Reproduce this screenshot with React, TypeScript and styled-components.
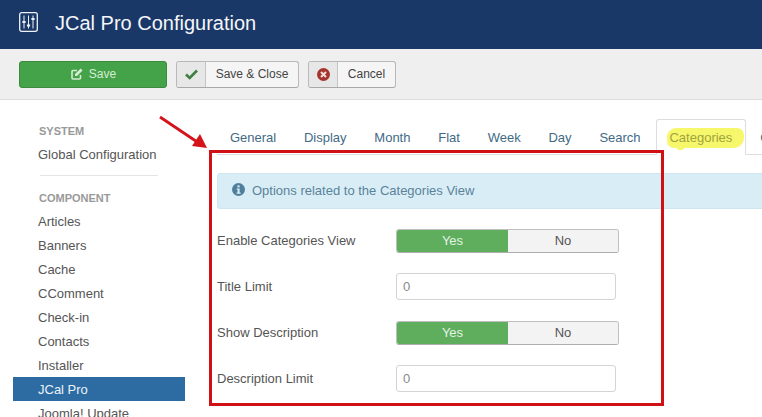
import React from "react";
import styled, { createGlobalStyle } from "styled-components";

const Global = createGlobalStyle`
  html, body { margin: 0; padding: 0; background: #fff; }
  body { width: 762px; height: 417px; overflow: hidden; font-family: "Liberation Sans", Arial, sans-serif; font-size: 13px; color: #515151; }
  * { box-sizing: border-box; }
`;

const Page = styled.div`
  position: relative;
  width: 762px;
  height: 417px;
  overflow: hidden;
`;

const Header = styled.header`
  height: 49px;
  background: #1a3867;
  display: flex;
  align-items: center;
  padding: 0 0 3px 19px;
  gap: 17px;
  color: #fff;
`;

const HeaderIcon = styled.svg`
  margin-bottom: 2px;
  flex: none;
`;

const Title = styled.h1`
  margin: 0;
  font-size: 20px;
  font-weight: 400;
  line-height: 24px;
  color: #f4f6fa;
`;

const Toolbar = styled.div`
  height: 51px;
  background: #efefef;
  border-bottom: 1px solid #dcdcdc;
  display: flex;
  align-items: center;
  padding: 0 0 0 19px;
  gap: 9px;
`;

const SaveButton = styled.button`
  width: 148px;
  height: 27px;
  background: #44a348;
  border: 1px solid #3b8a3e;
  border-radius: 3px;
  color: #d4ecd4;
  font: 12px "Liberation Sans", Arial, sans-serif;
  display: flex;
  align-items: center;
  justify-content: center;
  gap: 6px;
  padding: 0 0 0 1px;
`;

const GroupButton = styled.button<{ $w: number }>`
  width: ${(p) => p.$w}px;
  height: 27px;
  background: #f5f5f5;
  border: 1px solid #b9b9b9;
  border-bottom-color: #a8a8a8;
  border-radius: 3px;
  color: #444;
  font: 12px "Liberation Sans", Arial, sans-serif;
  display: flex;
  align-items: stretch;
  padding: 0;
  overflow: hidden;
`;

const IconCell = styled.span`
  width: 29px;
  flex: none;
  background: #e7e7e7;
  border-right: 1px solid #c4c4c4;
  display: flex;
  align-items: center;
  justify-content: center;
`;

const ButtonLabel = styled.span`
  flex: 1;
  display: flex;
  align-items: center;
  justify-content: center;
`;

const Body = styled.div`
  display: flex;
  align-items: flex-start;
`;

const Sidebar = styled.nav`
  width: 172px;
  margin-left: 13px;
  padding-top: 23px;
  flex: none;
`;

const SectionLabel = styled.div`
  font-size: 11px;
  font-weight: 700;
  color: #999;
  line-height: 16px;
  padding-left: 26px;
  margin-bottom: 3px;
`;

const NavItem = styled.div<{ $active?: boolean }>`
  height: 24px;
  line-height: 25px;
  padding-left: 25px;
  font-size: 13px;
  color: ${(p) => (p.$active ? "#eaf2fa" : "#555")};
  background: ${(p) => (p.$active ? "#2d6ca2" : "transparent")};
  white-space: nowrap;
`;

const NavDivider = styled.div`
  width: 118px;
  height: 1px;
  background: #e5e5e5;
  margin: 9px 0 14px 27px;
`;

const Main = styled.main`
  flex: 1;
  min-width: 0;
  margin-left: 32px;
  padding-top: 19px;
`;

const Tabs = styled.div`
  height: 36px;
  display: flex;
  align-items: stretch;
  border-bottom: 1px solid #ddd;
`;

const Tab = styled.div<{ $active?: boolean }>`
  position: relative;
  padding: ${(p) => (p.$active ? "0 13px 0 12px" : "0 12.9px")};
  margin-left: ${(p) => (p.$active ? "2px" : "0")};
  height: 36px;
  line-height: 35px;
  font-size: 13px;
  color: ${(p) => (p.$active ? "#9ea33c" : "#3f6a85")};
  white-space: nowrap;
  flex: none;
  border: 1px solid ${(p) => (p.$active ? "#ddd" : "transparent")};
  border-bottom-color: ${(p) => (p.$active ? "#fff" : "transparent")};
  border-radius: 3px 3px 0 0;
  background: ${(p) => (p.$active ? "#fff" : "transparent")};
  &:first-child {
    margin-left: -1px;
  }
`;

const TabText = styled.span`
  position: relative;
`;

const Highlight = styled.span`
  position: absolute;
  left: 10px;
  top: 8px;
  width: 77px;
  height: 20px;
  background: #f7f76c;
  border-radius: 9px 7px 10px 7px;
  &::after {
    content: "";
    position: absolute;
    left: 10px;
    bottom: -2px;
    width: 7px;
    height: 5px;
    border-radius: 3px;
    background: #f7f76c;
  }
`;

const Alert = styled.div`
  margin-top: 18px;
  margin-right: -10px;
  height: 36px;
  background: #d9edf7;
  border: 1px solid #cfe5ef;
  border-radius: 3px 0 0 3px;
  display: flex;
  align-items: center;
  gap: 7px;
  padding: 0 0 1px 14px;
  color: #5a8399;
  font-size: 13px;
`;

const AlertIcon = styled.svg`
  flex: none;
  margin-bottom: 2px;
`;

const Form = styled.div`
  margin-top: 8px;
  display: flex;
  flex-direction: column;
`;

const Row = styled.div`
  height: 46px;
  display: flex;
  align-items: center;
`;

const Label = styled.label`
  width: 179px;
  flex: none;
  font-size: 13px;
  color: #555;
`;

const Toggle = styled.div`
  width: 223px;
  height: 24px;
  margin-top: 1px;
  display: flex;
  border: 1px solid #c0c0c0;
  border-bottom-color: #adadad;
  border-radius: 3px;
  overflow: hidden;
  font-size: 13px;
`;

const ToggleOption = styled.div<{ $on?: boolean }>`
  flex: ${(p) => (p.$on ? "0 0 111px" : "1")};
  display: flex;
  align-items: center;
  justify-content: center;
  padding-bottom: 1px;
  background: ${(p) => (p.$on ? "#5eae5e" : "#f3f3f3")};
  color: ${(p) => (p.$on ? "#e4f3e4" : "#555")};
`;

const Input = styled.div`
  width: 220px;
  height: 27px;
  border: 1px solid #d4d4d4;
  border-radius: 3px;
  display: flex;
  align-items: center;
  padding-left: 6px;
  font-size: 13px;
  color: #888;
  background: #fff;
`;

const RedBox = styled.div`
  position: absolute;
  left: 209px;
  top: 150px;
  width: 455px;
  height: 256px;
  border: 3px solid #cf1015;
  z-index: 3;
  pointer-events: none;
`;

const Arrow = styled.svg`
  position: absolute;
  left: 155px;
  top: 112px;
  z-index: 3;
`;

const items = ["Articles", "Banners", "Cache", "CComment", "Check-in", "Contacts", "Installer"];
const tabs = ["General", "Display", "Month", "Flat", "Week", "Day", "Search"];

function YesNo() {
  return (
    <Toggle>
      <ToggleOption $on>Yes</ToggleOption>
      <ToggleOption>No</ToggleOption>
    </Toggle>
  );
}

export default function App() {
  return (
    <Page>
      <Global />
      <Header>
        <HeaderIcon width="19" height="20" viewBox="0 0 19 20" fill="none" stroke="#eef2f8" strokeWidth="1.3">
          <rect x="0.7" y="0.7" width="17.6" height="18.6" rx="2" />
          <path d="M5 3.5v13M9.5 3.5v13M14 3.5v13" strokeWidth="1" />
          <path d="M3.4 10h3.2M7.9 13.5h3.2M12.4 7h3.2" strokeWidth="2.2" />
        </HeaderIcon>
        <Title>JCal Pro Configuration</Title>
      </Header>
      <Toolbar>
        <SaveButton>
          <svg width="12" height="12" viewBox="0 0 12 12" fill="none" stroke="#d4ecd4" strokeWidth="1.6">
            <path d="M9.5 7v3a1 1 0 0 1-1 1H2a1 1 0 0 1-1-1V3.5a1 1 0 0 1 1-1h4" />
            <path d="M4 6 9.7.6 11.6 2.4 6 8H4Z" fill="#d4ecd4" stroke="none" />
          </svg>
          Save
        </SaveButton>
        <GroupButton $w={123}>
          <IconCell>
            <svg width="13" height="11" viewBox="0 0 13 11" fill="none" stroke="#3f7f3f" strokeWidth="2.6">
              <path d="M1 5.5 4.7 9 12 1.5" />
            </svg>
          </IconCell>
          <ButtonLabel>Save &amp; Close</ButtonLabel>
        </GroupButton>
        <GroupButton $w={88}>
          <IconCell>
            <svg width="13" height="13" viewBox="0 0 13 13">
              <circle cx="6.5" cy="6.5" r="6.5" fill="#a5352c" />
              <path d="M4 4l5 5M9 4l-5 5" stroke="#f3dfdc" strokeWidth="2" />
            </svg>
          </IconCell>
          <ButtonLabel>Cancel</ButtonLabel>
        </GroupButton>
      </Toolbar>
      <Body>
        <Sidebar>
          <SectionLabel>SYSTEM</SectionLabel>
          <NavItem>Global Configuration</NavItem>
          <NavDivider />
          <SectionLabel>COMPONENT</SectionLabel>
          {items.map((i) => (
            <NavItem key={i}>{i}</NavItem>
          ))}
          <NavItem $active>JCal Pro</NavItem>
          <NavItem>Joomla! Update</NavItem>
        </Sidebar>
        <Main>
          <Tabs>
            {tabs.map((t) => (
              <Tab key={t}>{t}</Tab>
            ))}
            <Tab $active>
              <Highlight />
              <TabText>Categories</TabText>
            </Tab>
            <Tab>Custom</Tab>
          </Tabs>
          <Alert>
            <AlertIcon width="13" height="13" viewBox="0 0 13 13">
              <circle cx="6.5" cy="6.5" r="6.5" fill="#4f7f9c" />
              <rect x="5.4" y="2.4" width="2.2" height="2" fill="#d9edf7" />
              <path d="M4.8 5.5h2.8v4h1v1.2H4.6V9.5h1V6.7h-.8Z" fill="#d9edf7" />
            </AlertIcon>
            Options related to the Categories View
          </Alert>
          <Form>
            <Row>
              <Label>Enable Categories View</Label>
              <YesNo />
            </Row>
            <Row>
              <Label>Title Limit</Label>
              <Input>0</Input>
            </Row>
            <Row>
              <Label>Show Description</Label>
              <YesNo />
            </Row>
            <Row>
              <Label>Description Limit</Label>
              <Input>0</Input>
            </Row>
          </Form>
        </Main>
      </Body>
      <RedBox />
      <Arrow width="56" height="40" viewBox="0 0 56 40">
        <path d="M5 5 43 30.5" stroke="#d3141a" strokeWidth="2.8" />
        <path d="M52 36 37 34 45 22Z" fill="#d3141a" />
      </Arrow>
    </Page>
  );
}
